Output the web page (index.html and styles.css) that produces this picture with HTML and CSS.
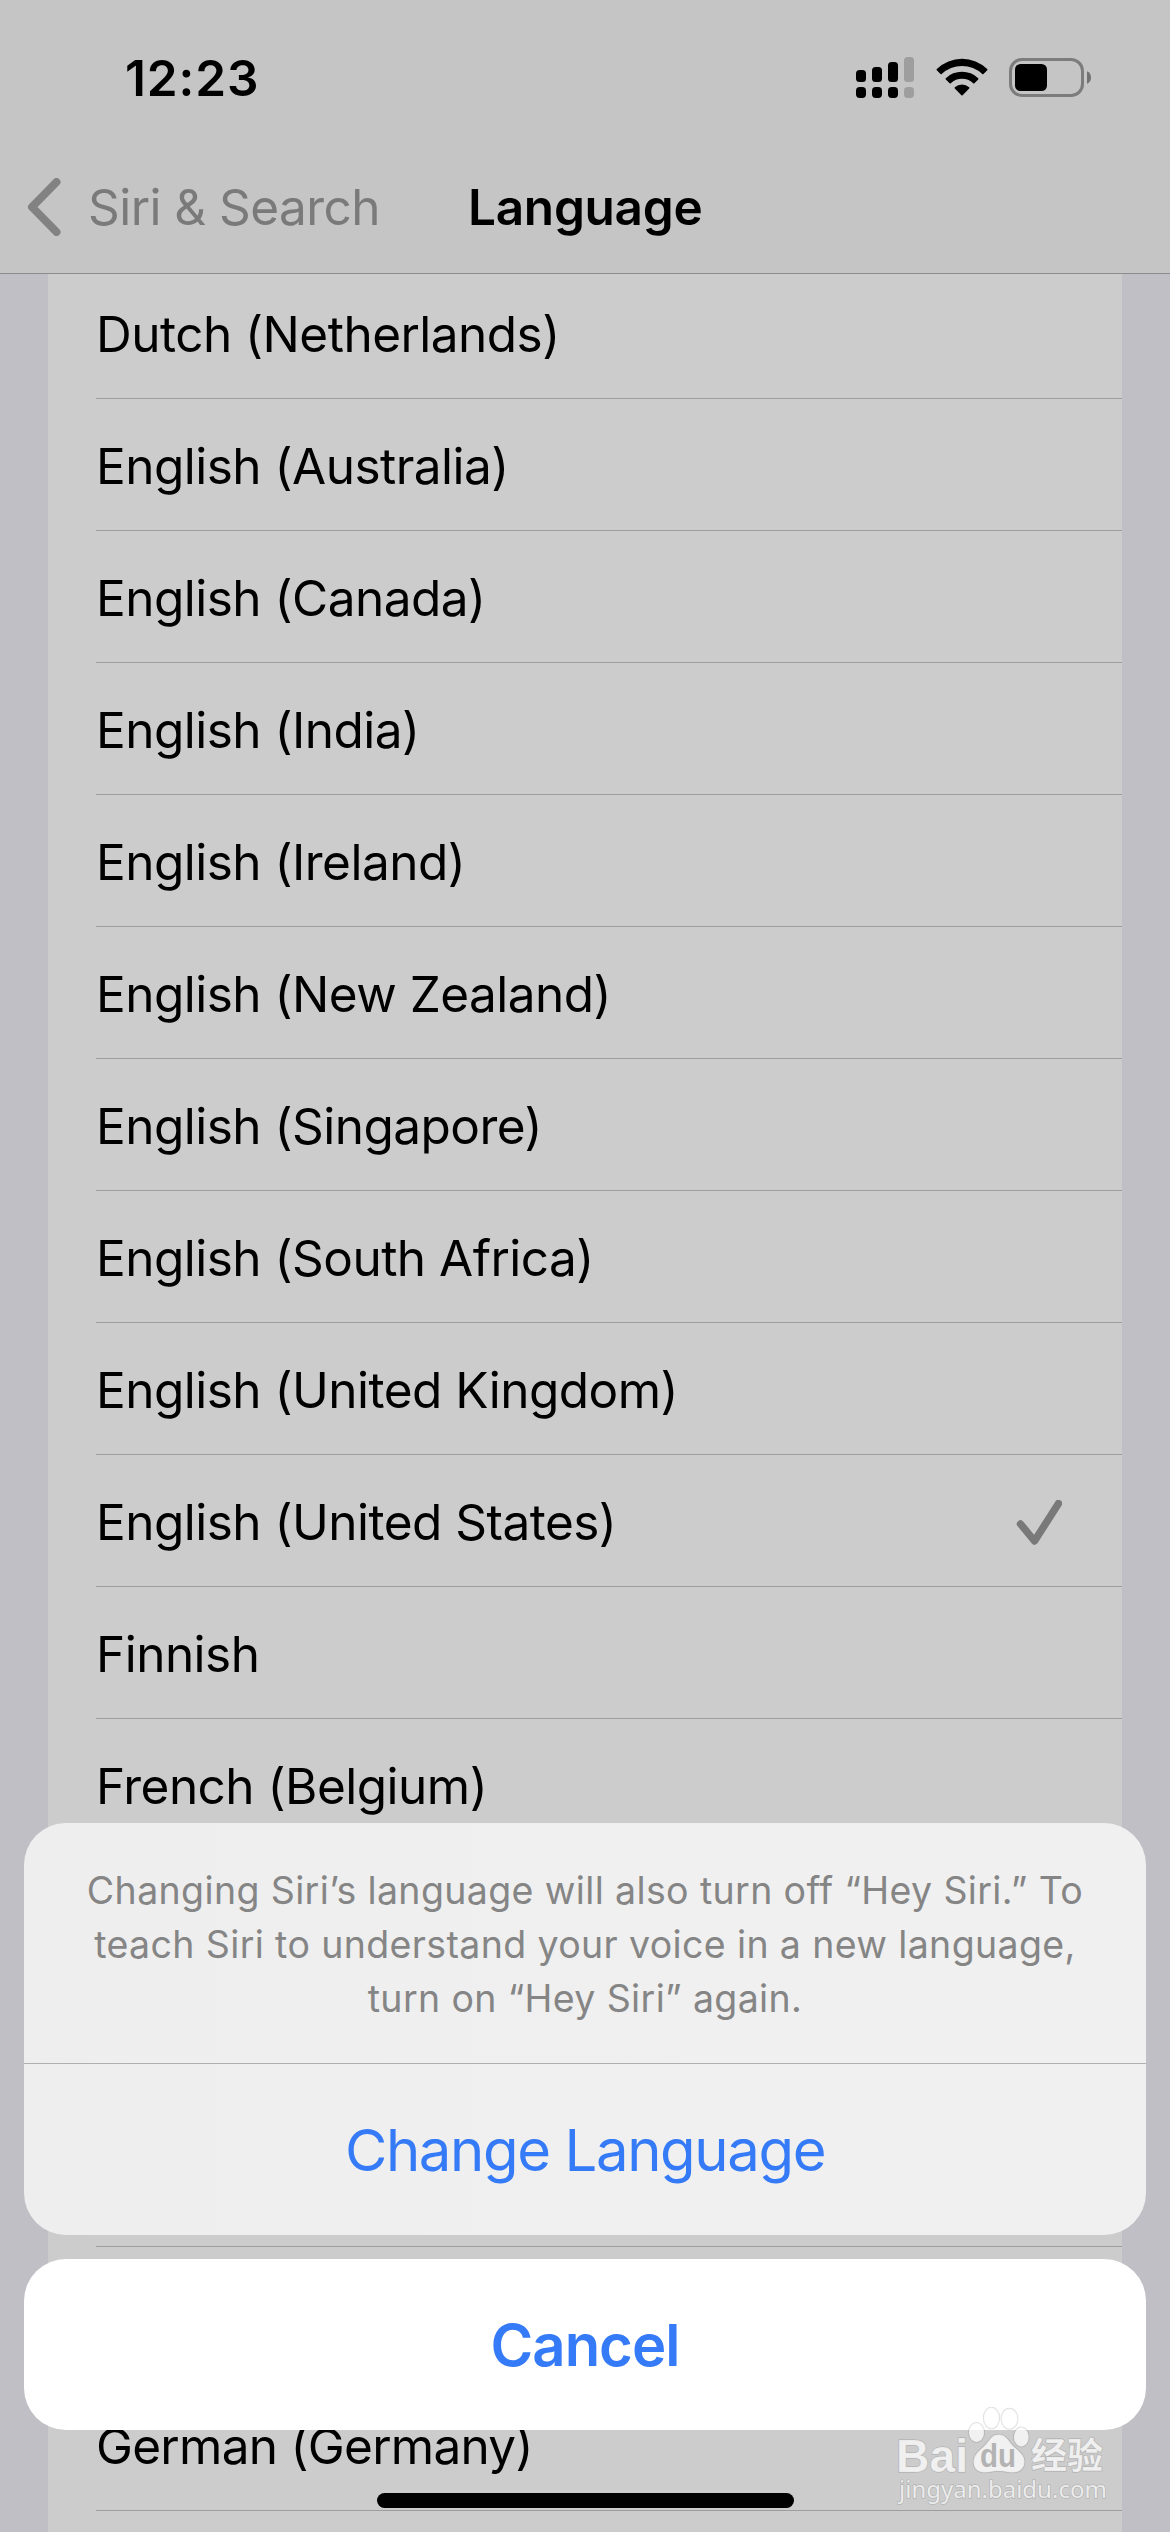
FILE: index.html
```html
<!DOCTYPE html>
<html lang="en">
<head>
<meta charset="utf-8">
<title>Language</title>
<link rel="stylesheet" href="styles.css">
</head>
<body>
<div class="screen">
  <header class="header">
    <div class="status">
      <span class="time">12:23</span>
      <div class="status-icons">
        <svg class="signal" width="58" height="41" viewBox="0 0 58 41">
          <rect x="0" y="13" width="10" height="12" rx="3.5"/>
          <rect x="16" y="10" width="10" height="15" rx="3.5"/>
          <rect x="32" y="5" width="10" height="20" rx="3.5"/>
          <rect class="off" x="48" y="0" width="10" height="25" rx="3.5"/>
          <rect x="0" y="30" width="10" height="11" rx="3.7"/>
          <rect x="16" y="30" width="10" height="11" rx="3.7"/>
          <rect x="32" y="30" width="10" height="11" rx="3.7"/>
          <rect class="off" x="48" y="30" width="10" height="11" rx="3.7"/>
        </svg>
        <svg class="wifi" width="52" height="38" viewBox="0 0 52 38">
          <path d="M0.8 11.1a36 36 0 0 1 50.4 0q.5.6 0 1.2l-3.7 3.7q-.6.5-1.2 0a29.5 29.5 0 0 0-40.6 0q-.6.5-1.2 0L.8 12.3q-.5-.6 0-1.2z"/>
          <path d="M9.8 20.2a23.3 23.3 0 0 1 32.4 0q.6.6 0 1.2l-3.8 3.8q-.6.5-1.2 0a16.5 16.5 0 0 0-22.4 0q-.6.5-1.2 0l-3.8-3.8q-.6-.6 0-1.2z"/>
          <path d="M18.8 29.2a11.2 11.2 0 0 1 14.4 0q.6.6 0 1.3l-6.6 6.7q-.6.6-1.2 0l-6.6-6.7q-.6-.7 0-1.3z"/>
        </svg>
        <svg class="battery" width="83" height="39" viewBox="0 0 83 39">
          <rect class="shell" x="1.5" y="1.5" width="72" height="36" rx="11.5"/>
          <rect x="6" y="6" width="32" height="27" rx="5.5"/>
          <path class="cap" d="M78 13.2q4 1.800 4 6.300t-4 6.300z"/>
        </svg>
      </div>
    </div>
    <nav class="nav">
      <svg class="chevron" width="34" height="58" viewBox="0 0 34 58"><path d="M29.500 4 5 29l24.500 25"/></svg>
      <span class="back">Siri &amp; Search</span>
      <h1 class="title">Language</h1>
    </nav>
  </header>

  <main class="content">
    <ul class="list">
      <li class="row">Dutch (Netherlands)</li>
      <li class="row">English (Australia)</li>
      <li class="row">English (Canada)</li>
      <li class="row">English (India)</li>
      <li class="row">English (Ireland)</li>
      <li class="row">English (New Zealand)</li>
      <li class="row">English (Singapore)</li>
      <li class="row">English (South Africa)</li>
      <li class="row">English (United Kingdom)</li>
      <li class="row">English (United States)
        <svg class="check" width="46" height="46" viewBox="0 0 46 46"><path d="M4.500 24 18.500 41 42.500 3.500"/></svg>
      </li>
      <li class="row">Finnish</li>
      <li class="row">French (Belgium)</li>
      <li class="row"></li>
      <li class="row"></li>
      <li class="row"></li>
      <li class="row"></li>
      <li class="row tight">German (Germany)</li>
      <li class="row"></li>
    </ul>
  </main>

  <section class="sheet">
    <div class="panel">
      <p class="message">Changing Siri’s language will also turn off “Hey Siri.” To<br>teach Siri to understand your voice in a new language,<br>turn on “Hey Siri” again.</p>
      <div class="action">Change Language</div>
    </div>
    <div class="cancel">Cancel</div>
  </section>

  <div class="home"></div>

  <svg class="mark" width="240" height="120" viewBox="0 0 240 120">
    <g class="ink">
      <ellipse cx="96.500" cy="32.500" rx="7.700" ry="9.700"/>
      <ellipse cx="111.500" cy="18" rx="7.800" ry="10.500"/>
      <ellipse cx="129.500" cy="18.800" rx="8.200" ry="10.200"/>
      <ellipse cx="141.300" cy="37" rx="7.500" ry="9.700"/>
      <path d="M118.500 34.500c6 0 9 4 12.500 9 4 5.500 13.500 9.500 13.500 18 0 7.500-5.500 11-11.500 11-5 0-9-1.500-14.500-1.500s-9 1.500-14 1.500c-6.500 0-11-4-11-10.500 0-9 8.500-13 13-18.500 4-5 6-9 12-9z"/>
      <text class="bai" x="16" y="71.500" textLength="72" lengthAdjust="spacingAndGlyphs">Bai</text>
      <text class="cjk" x="151" y="68.500">经验</text>
      <text class="url" x="19" y="98">jingyan.baidu.com</text>
    </g>
    <text class="du" x="100" y="67" textLength="36" lengthAdjust="spacingAndGlyphs">du</text>
  </svg>
</div>
</body>
</html>
```
FILE: styles.css
```css
* {
  box-sizing: border-box;
  margin: 0;
  padding: 0;
}

body {
  background: #c0bfc5;
  font-family: Inter, "Liberation Sans", sans-serif;
  font-size: 49.5px;
  color: #000;
}

.screen {
  position: relative;
  display: flex;
  flex-direction: column;
  width: 1170px;
  height: 2532px;
  overflow: hidden;
}

.header {
  flex: none;
  height: 274px;
  background: #c5c5c5;
  border-bottom: 1px solid #8c8c8e;
}

.status {
  display: flex;
  justify-content: space-between;
  height: 141px;
  padding: 57px 78px 0 125px;
}

.time {
  height: 42px;
  line-height: 42px;
  font-weight: 600;
  letter-spacing: 0.9px;
}

.status-icons {
  display: flex;
  align-items: flex-start;
}

.signal .off {
  fill: #9e9e9e;
}

.wifi {
  margin: 1px 0 0 22px;
}

.battery {
  margin: 1px 0 0 21px;
}

.battery .shell {
  fill: none;
  stroke: #7c7c7c;
  stroke-width: 3;
}

.battery .cap {
  fill: #717171;
}

.nav {
  display: flex;
  align-items: center;
  height: 132px;
  padding-left: 27px;
  line-height: 60px;
}

.chevron {
  fill: none;
  stroke: #828282;
  stroke-width: 8;
  stroke-linecap: round;
  stroke-linejoin: round;
}

.back {
  width: 380px;
  margin-left: 27px;
  color: #7a7a7a;
  letter-spacing: -0.55px;
}

.title {
  font-size: 49.5px;
  font-weight: 600;
  letter-spacing: -0.27px;
}

.content {
  flex: 1;
  overflow: hidden;
  padding: 0 48px;
}

.list {
  margin-top: -7px;
  padding-left: 48px;
  background: #ccc;
  list-style: none;
}

.row {
  display: flex;
  justify-content: space-between;
  align-items: center;
  height: 132px;
  padding: 3px 60px 0 0;
  border-bottom: 1px solid #9d9d9f;
  letter-spacing: -0.52px;
}

.row.tight {
  letter-spacing: -0.72px;
}

.check {
  margin-top: 1px;
  fill: none;
  stroke: #797979;
  stroke-width: 7.4;
  stroke-linecap: round;
  stroke-linejoin: round;
}

.sheet {
  position: absolute;
  left: 24px;
  right: 24px;
  bottom: 102px;
  display: flex;
  flex-direction: column;
  gap: 24px;
  text-align: center;
  color: #357af6;
}

.panel {
  height: 412px;
  border-radius: 42px;
  background: linear-gradient(90deg, #eee, #f0f0f0 60%);
}

.message {
  height: 241px;
  padding-top: 41px;
  border-bottom: 1px solid #afafb0;
  font-size: 37.5px;
  line-height: 54px;
  letter-spacing: 0.37px;
  color: #858585;
}

.action {
  font-size: 58px;
  line-height: 172px;
  letter-spacing: -1.36px;
}

.cancel {
  height: 171px;
  border-radius: 42px;
  background: #fff;
  font-size: 58px;
  font-weight: 600;
  line-height: 172px;
  letter-spacing: -1px;
}

.home {
  position: absolute;
  left: 377px;
  bottom: 24px;
  width: 417px;
  height: 15px;
  border-radius: 8px;
  background: #000;
}

.mark {
  position: absolute;
  right: 50px;
  bottom: 12px;
}

.ink {
  fill: rgba(255, 255, 255, 0.72);
  stroke: rgba(0, 0, 0, 0.13);
  stroke-width: 1.6;
  paint-order: stroke;
}

.bai {
  font: 700 47px "Liberation Sans", sans-serif;
}

.cjk {
  font: 700 36px "Noto Sans CJK SC", sans-serif;
}

.url {
  font: 400 24px "Noto Sans", sans-serif;
}

.du {
  font: 700 33px "Liberation Sans", sans-serif;
  fill: #b3b3b3;
}
```
